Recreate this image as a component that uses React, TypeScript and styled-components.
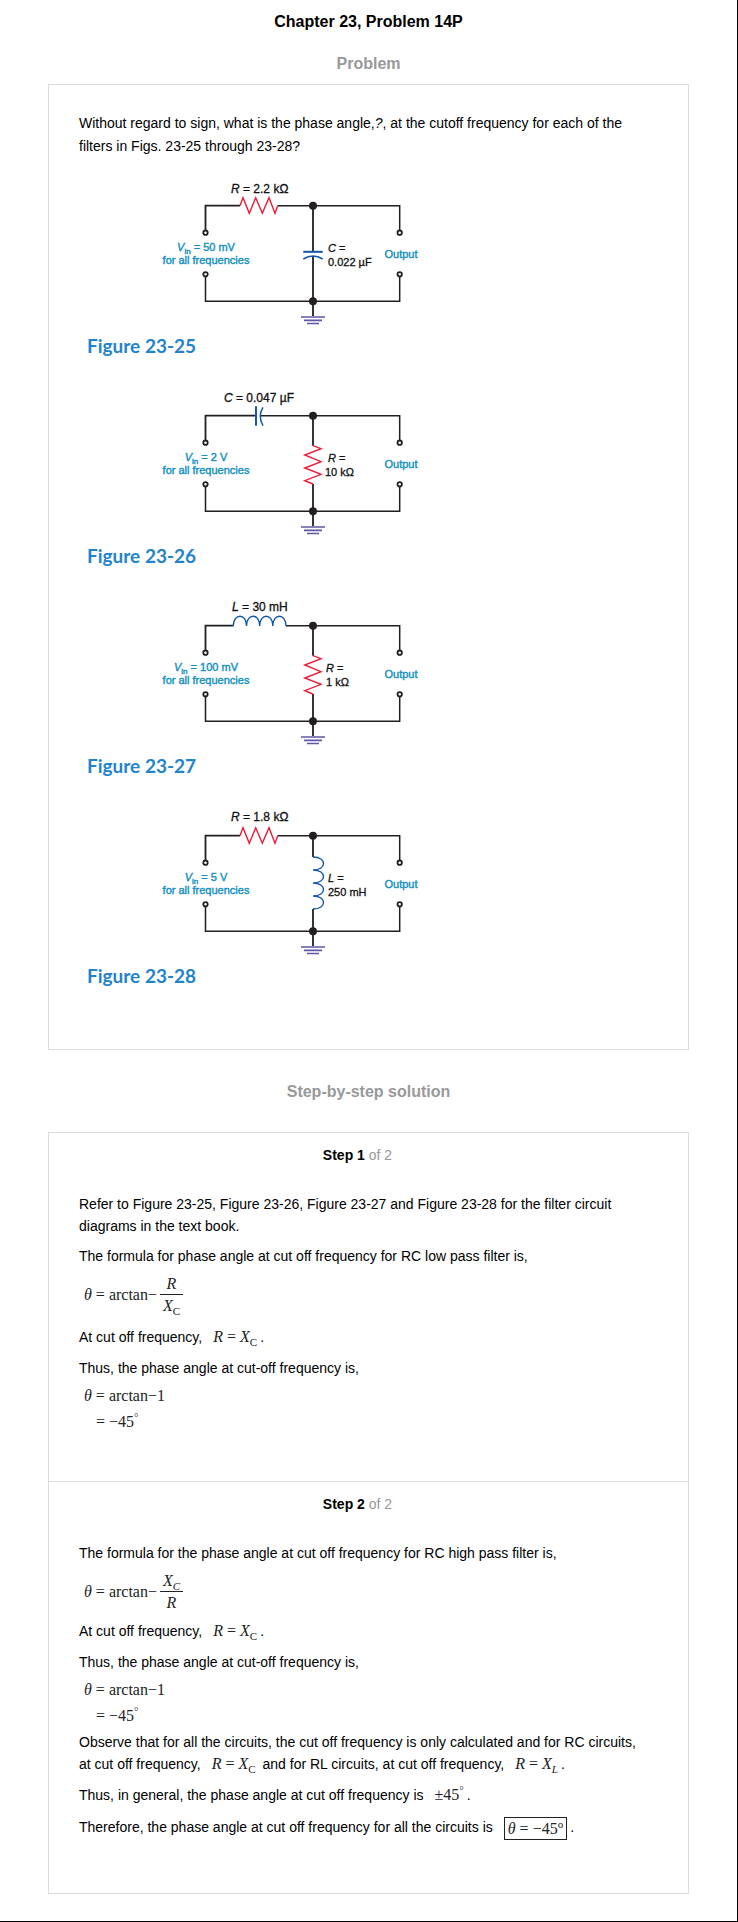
import React from "react";
import styled, { createGlobalStyle } from "styled-components";

const GlobalStyle = createGlobalStyle`
  *, *::before, *::after { box-sizing: border-box; }
  body {
    margin: 0;
    background: #fff;
    color: #000;
    font-family: "Liberation Sans", Arial, Helvetica, sans-serif;
    font-size: 14px;
    line-height: 22px;
  }
`;

const Page = styled.main`
  min-height: 100vh;
  padding: 11px 48px 26px;
  border-right: 1px solid #000;
  border-bottom: 1px solid #000;
`;

const Title = styled.h1`
  margin: 0;
  font-size: 16px;
  line-height: 22px;
  text-align: center;
`;

const SectionTitle = styled.h2<{ $top: number; $bottom: number }>`
  margin: ${(p) => p.$top}px 0 ${(p) => p.$bottom}px;
  color: #999;
  font-size: 16px;
  line-height: 22px;
  text-align: center;
`;

const Card = styled.section`
  border: 1px solid #dcdcdc;
`;

const ProblemBody = styled.div`
  padding: 27px 30px 29px;
`;

const Question = styled.p`
  margin: 0 0 22px;
  line-height: 23px;
`;

const Figure = styled.figure`
  margin: 0;
  height: 210px;
`;

const Drawing = styled.svg`
  display: block;
  width: 360px;
  height: 154px;
  max-width: 100%;
  fill: none;
  font-family: "Liberation Sans", Arial, sans-serif;
  font-size: 11px;
`;

const Caption = styled.figcaption`
  padding-left: 8px;
  color: #2484cb;
  font-family: Lato, "Open Sans", sans-serif;
  font-size: 19px;
  font-weight: 700;
  line-height: 24px;
`;

const Step = styled.article`
  padding: 11px 30px 52px;

  & + & {
    padding-bottom: 53px;
    border-top: 1px solid #dcdcdc;
  }
`;

const StepTitle = styled.h3`
  margin: 0 0 27px;
  padding-right: 22px;
  font-size: 14px;
  line-height: 22px;
  text-align: center;
`;

const StepTotal = styled.span`
  color: #999;
  font-weight: 400;
`;

const Text = styled.p<{ $math?: boolean }>`
  margin: 0 0 8px;
  line-height: ${(p) => (p.$math ? 24 : 22)}px;

  &:last-child {
    margin-bottom: 0;
  }
`;

const Formula = styled.div<{ $after?: number }>`
  margin: 0 0 ${(p) => p.$after ?? 8}px;
  padding-left: 5px;
  color: #222;
  font-family: "Liberation Serif", "Times New Roman", serif;
  font-size: 16px;

  &:last-child {
    margin-bottom: 0;
  }
`;

const FormulaRow = styled.div`
  display: flex;
  align-items: center;
  height: 40px;
`;

const FormulaLine = styled.div<{ $indent?: boolean }>`
  height: 26px;
  line-height: 18px;
  padding-left: ${(p) => (p.$indent ? 8 : 0)}px;

  &:last-child {
    height: 16px;
  }
`;

const Inline = styled.span`
  display: inline-block;
  margin: 0 3px 0 11px;
  color: #222;
  font-family: "Liberation Serif", "Times New Roman", serif;
  font-size: 16px;
  line-height: 22px;
`;

const Answer = styled(Inline)`
  padding: 0 3px;
  border: 1px solid #222;
  line-height: 21px;
  vertical-align: middle;
`;

const Op = styled.span`
  margin: 0 4px;
`;

const Sub = styled.sub`
  font-size: 11px;
  line-height: 0;
`;

const Degree = styled.sup`
  font-size: 11px;
  line-height: 0;
`;

const Fraction = styled.span`
  display: inline-flex;
  flex-direction: column;
  align-items: center;
  margin-left: 3px;
`;

const Part = styled.span<{ $over?: boolean }>`
  padding: 0 2px;
  min-width: 23px;
  height: 22px;
  line-height: 22px;
  text-align: center;
  border-bottom: ${(p) => (p.$over ? "1px solid #222" : "none")};
`;

const INK = "#231f20";
const CYAN = "#1490c0";
const RED = "#ee1c36";
const BLUE = "#1257ad";

const ZigZagH = () => (
  <path d="M161 25.7 L164 17.7 L170.3 33.3 L176.7 17.7 L183.3 33.3 L190 17.7 L196 33.3 L198.7 25.7" stroke={RED} strokeWidth="1.4" />
);

const ZigZagV = () => (
  <path d="M234 55.7 L242 58.7 L225.7 65 L242 71.7 L225.7 78 L242 84.3 L225.7 90.7 L234 94" stroke={RED} strokeWidth="1.4" />
);

const CapacitorH = () => (
  <g stroke={BLUE}>
    <path d="M177 16.3 V35.7" strokeWidth="2" />
    <path d="M184 17.3 Q178.5 26 184 35.7" strokeWidth="1.5" />
  </g>
);

const CapacitorV = () => (
  <g stroke={BLUE}>
    <path d="M224.3 71.8 H243.7" strokeWidth="2" />
    <path d="M224.3 79 Q234 73 243.7 79" strokeWidth="1.5" />
  </g>
);

const CoilH = () => (
  <path
    d="M154.3 26 C154.5 13 167.5 13 167.5 26 C167.5 13 180.7 13 180.7 26 C180.7 13 193.8 13 193.8 26 C193.8 13 206.8 13 207 26"
    stroke={BLUE}
    strokeWidth="1.4"
  />
);

const CoilV = () => (
  <path
    d="M234 47 C248 47 248 60 234 60 C248 60 248 73 234 73 C248 73 248 86 234 86 C248 86 248 99 234 99"
    stroke={BLUE}
    strokeWidth="1.4"
  />
);

type Kind = "resistor" | "capacitor" | "inductor";

const series = {
  resistor: { from: 161, to: 198.7, Part: ZigZagH },
  capacitor: { from: 177, to: 181.3, Part: CapacitorH },
  inductor: { from: 154.3, to: 207, Part: CoilH },
};

const shunt = {
  resistor: { from: 55.7, to: 94, Part: ZigZagV },
  capacitor: { from: 71.7, to: 76, Part: CapacitorV },
  inductor: { from: 47, to: 99, Part: CoilV },
};

interface CircuitProps {
  name: string;
  top: Kind;
  topSymbol: string;
  topValue: string;
  topX: number;
  topY: number;
  side: Kind;
  sideSymbol: string;
  sideValue: string;
  sideX: number;
  valueX: number;
  input: string;
}

const circuits: CircuitProps[] = [
  { name: "Figure 23-25", top: "resistor", topSymbol: "R", topValue: "2.2 kΩ", topX: 152, topY: 13, side: "capacitor", sideSymbol: "C", sideValue: "0.022 µF", sideX: 249, valueX: 249, input: "50 mV" },
  { name: "Figure 23-26", top: "capacitor", topSymbol: "C", topValue: "0.047 µF", topX: 145, topY: 12, side: "resistor", sideSymbol: "R", sideValue: "10 kΩ", sideX: 249, valueX: 246, input: "2 V" },
  { name: "Figure 23-27", top: "inductor", topSymbol: "L", topValue: "30 mH", topX: 153, topY: 11, side: "resistor", sideSymbol: "R", sideValue: "1 kΩ", sideX: 247, valueX: 247, input: "100 mV" },
  { name: "Figure 23-28", top: "resistor", topSymbol: "R", topValue: "1.8 kΩ", topX: 152, topY: 11, side: "inductor", sideSymbol: "L", sideValue: "250 mH", sideX: 249, valueX: 249, input: "5 V" },
];

function Circuit(c: CircuitProps) {
  const s = series[c.top];
  const p = shunt[c.side];
  return (
    <Figure>
      <Drawing viewBox="0 0 360 154" role="img" aria-label={c.name}>
        <g stroke={INK} strokeWidth="1.5">
          <path d={`M126.5 51 V25.7 H${s.from}`} strokeWidth="1.8" />
          <path d={`M${s.to} 25.7 H320.7 V51`} />
          <path d="M126.5 96 V121.2 H320.7 V96" />
          <path d={`M234 25.7 V${p.from} M234 ${p.to} V136`} strokeWidth="1.8" />
        </g>
        <g fill={INK}>
          <circle cx="234" cy="25.7" r="4" />
          <circle cx="234" cy="121.2" r="4" />
        </g>
        <g fill="#fff" stroke={INK} strokeWidth="1.8">
          <circle cx="126.5" cy="52.7" r="2.2" />
          <circle cx="126.5" cy="94.3" r="2.2" />
          <circle cx="320.7" cy="52.7" r="2.2" />
          <circle cx="320.7" cy="94.3" r="2.2" />
        </g>
        <path d="M222 137 H246 M225 140.3 H243 M228 143.5 H240" stroke="#5f57a6" strokeWidth="1.7" />
        <s.Part />
        <p.Part />
        <g fill="#111" stroke="#111" strokeWidth="0.3">
          <text x={c.topX} y={c.topY} fontSize="12">
            <tspan fontStyle="italic">{c.topSymbol}</tspan> = {c.topValue}
          </text>
          <text x={c.sideX} y="72">
            <tspan fontStyle="italic">{c.sideSymbol}</tspan> =
          </text>
          <text x={c.valueX} y="86">{c.sideValue}</text>
        </g>
        <g fill={CYAN} stroke={CYAN} strokeWidth="0.4" textAnchor="middle">
          <text x="127" y="71">
            <tspan fontStyle="italic">V</tspan>
            <tspan dy="3" fontSize="8">in</tspan>
            <tspan dy="-3"> = {c.input}</tspan>
          </text>
          <text x="127" y="84">for all frequencies</text>
          <text x="322" y="78">Output</text>
        </g>
      </Drawing>
      <Caption>{c.name}</Caption>
    </Figure>
  );
}

const Reactance = ({ sub, italic }: { sub: string; italic?: boolean }) => (
  <>
    <i>X</i>
    <Sub>{italic ? <i>{sub}</i> : sub}</Sub>
  </>
);

const Equal = ({ sub, italic }: { sub: string; italic?: boolean }) => (
  <Inline>
    <i>R</i>
    <Op>=</Op>
    <Reactance sub={sub} italic={italic} />
  </Inline>
);

interface ArctanFractionProps {
  over: React.ReactNode;
  under: React.ReactNode;
  after: number;
}

const ArctanFraction = ({ over, under, after }: ArctanFractionProps) => (
  <Formula $after={after}>
    <FormulaRow>
      <i>θ</i>
      <Op>=</Op>
      arctan−
      <Fraction>
        <Part $over>{over}</Part>
        <Part>{under}</Part>
      </Fraction>
    </FormulaRow>
  </Formula>
);

const ArctanResult = () => (
  <Formula>
    <FormulaLine>
      <i>θ</i>
      <Op>=</Op>
      arctan−1
    </FormulaLine>
    <FormulaLine $indent>
      <Op>=</Op>−45<Degree>°</Degree>
    </FormulaLine>
  </Formula>
);

export default function App() {
  return (
    <>
      <GlobalStyle />
      <Page>
        <Title>Chapter 23, Problem 14P</Title>
        <SectionTitle $top={20} $bottom={9}>Problem</SectionTitle>
        <Card>
          <ProblemBody>
            <Question>
              Without regard to sign, what is the phase angle,<i>?</i>, at the cutoff frequency for
              each of the filters in Figs. 23-25 through 23-28?
            </Question>
            {circuits.map((c) => (
              <Circuit key={c.name} {...c} />
            ))}
          </ProblemBody>
        </Card>

        <SectionTitle $top={31} $bottom={29}>Step-by-step solution</SectionTitle>
        <Card>
          <Step>
            <StepTitle>
              Step 1 <StepTotal>of 2</StepTotal>
            </StepTitle>
            <Text>
              Refer to Figure 23-25, Figure 23-26, Figure 23-27 and Figure 23-28 for the filter
              circuit diagrams in the text book.
            </Text>
            <Text>The formula for phase angle at cut off frequency for RC low pass filter is,</Text>
            <ArctanFraction over={<i>R</i>} under={<Reactance sub="C" />} after={10} />
            <Text $math>
              At cut off frequency,
              <Equal sub="C" />.
            </Text>
            <Text>Thus, the phase angle at cut-off frequency is,</Text>
            <ArctanResult />
          </Step>
          <Step>
            <StepTitle>
              Step 2 <StepTotal>of 2</StepTotal>
            </StepTitle>
            <Text>
              The formula for the phase angle at cut off frequency for RC high pass filter is,
            </Text>
            <ArctanFraction over={<Reactance sub="C" italic />} under={<i>R</i>} after={7} />
            <Text $math>
              At cut off frequency,
              <Equal sub="C" />.
            </Text>
            <Text>Thus, the phase angle at cut-off frequency is,</Text>
            <ArctanResult />
            <Text>
              Observe that for all the circuits, the cut off frequency is only calculated and for RC
              circuits, at{"\u00a0"}cut off frequency,
              <Equal sub="C" /> and for RL circuits, at cut off frequency,
              <Equal sub="L" italic />.
            </Text>
            <Text $math>
              Thus, in general, the phase angle at cut off frequency is
              <Inline>
                ±45<Degree>°</Degree>
              </Inline>
              .
            </Text>
            <Text $math>
              Therefore, the phase angle at cut off frequency for all the circuits is
              <Answer>
                <i>θ</i>
                <Op>=</Op>−45<Degree>o</Degree>
              </Answer>
              .
            </Text>
          </Step>
        </Card>
      </Page>
    </>
  );
}
